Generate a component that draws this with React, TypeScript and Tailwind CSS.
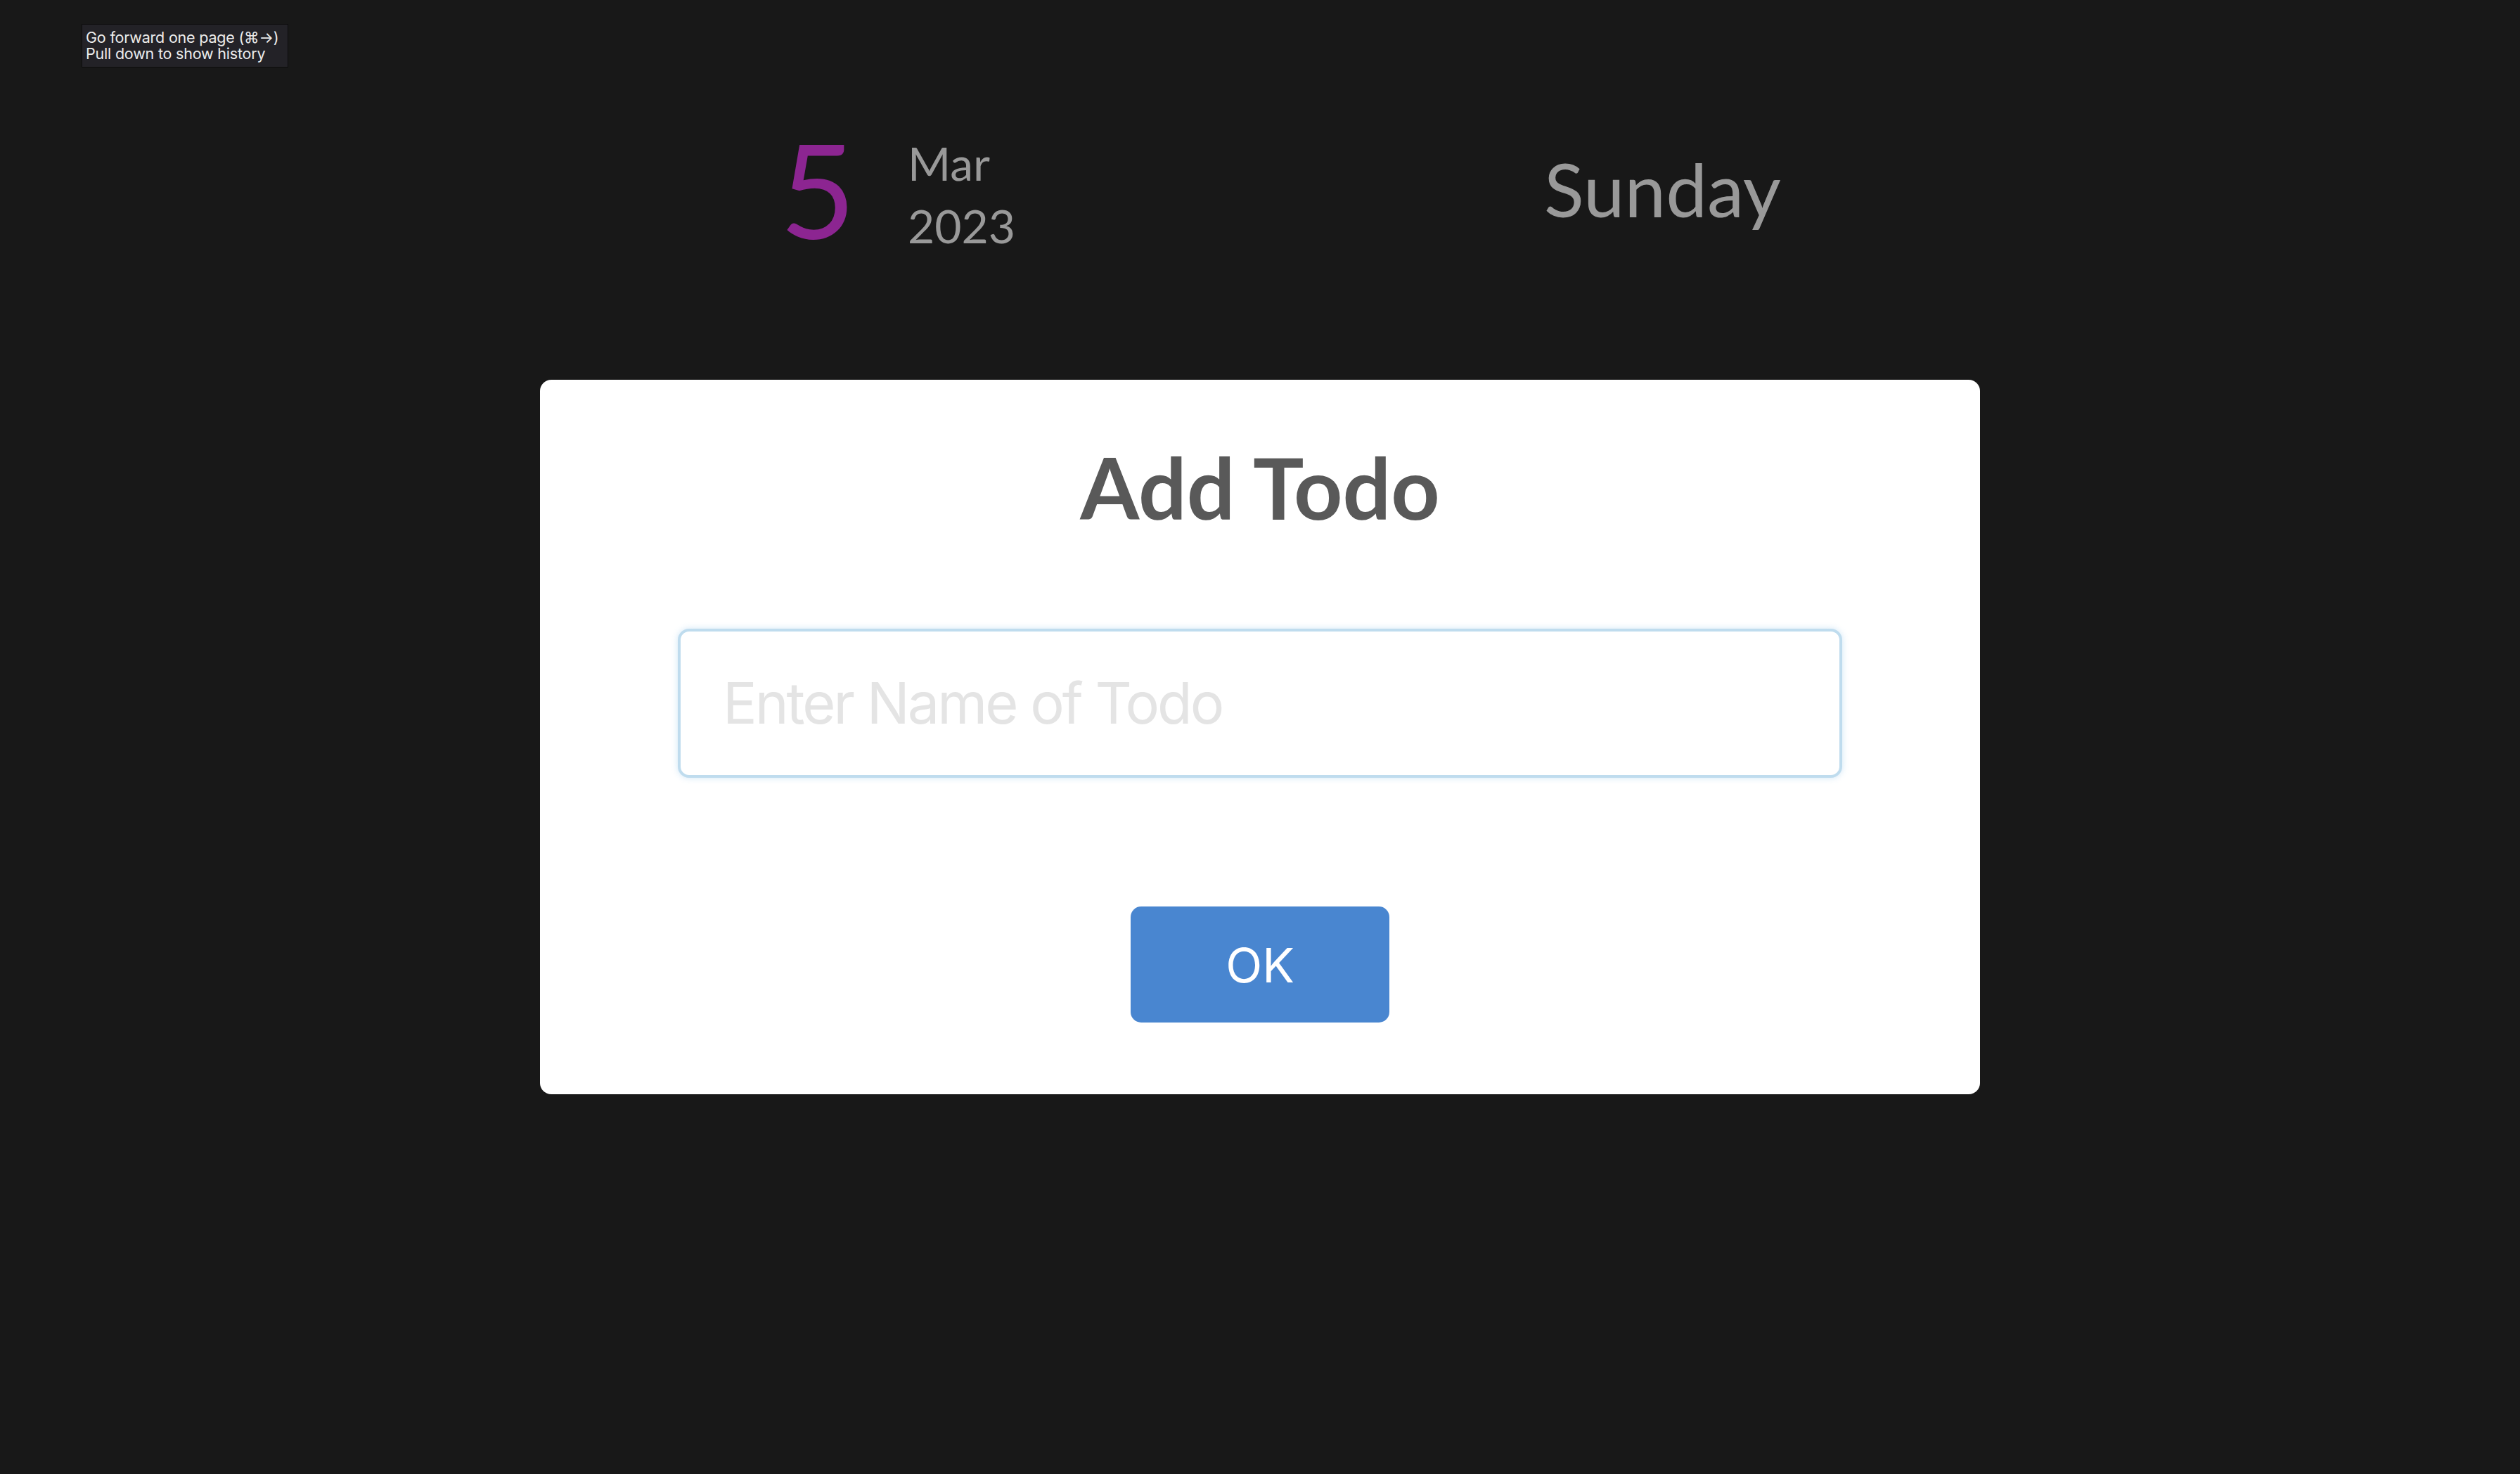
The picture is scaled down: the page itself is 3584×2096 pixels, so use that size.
import { useState } from "react";

export default function App() {
  const [todo, setTodo] = useState("");

  return (
    <div className="relative min-h-screen w-full bg-[#181818] font-['Lato',sans-serif]">
      {/* native browser tooltip left over the page */}
      <div className="absolute left-[116px] top-[34px] w-[294px] whitespace-nowrap border border-[#0c0c0c] bg-[#232227] px-[5px] py-[7px] font-['Inter',sans-serif] text-[21.5px] leading-[23px] tracking-[-0.2px] text-[#ececec]">
        <div>Go forward one page (⌘→)</div>
        <div>Pull down to show history</div>
      </div>

      <div className="mx-auto w-[2048px]">
        <header className="flex h-[540px] items-start justify-between pl-[341px] pr-[283px] pt-[175px]">
          <div className="flex items-start gap-[74px]">
            <span className="text-[186px] leading-none text-[#8c2591]">5</span>
            <div className="mt-[12px] flex flex-col text-[66px] leading-[89px] text-[#999999]">
              <span>Mar</span>
              <span>2023</span>
            </div>
          </div>
          <div className="mt-[30px] text-[105px] leading-[1.2] text-[#999999]">Sunday</div>
        </header>

        <div className="flex flex-col items-center rounded-[16px] bg-white pb-[102px] pt-[80px]">
          <h1 className="text-[121px] font-bold leading-[1.2] text-[#595959]">Add Todo</h1>

          <input
            type="text"
            value={todo}
            onChange={(e) => setTodo(e.target.value)}
            placeholder="Enter Name of Todo"
            className="mt-[129px] h-[212px] w-[1656px] rounded-[16px] border-4 border-[#bfdcee] bg-white pl-[60px] font-['Inter',sans-serif] text-[81px] tracking-[-3px] text-[#555] shadow-[0_0_10px_rgba(150,200,235,0.45)] outline-none placeholder:text-[#e4e4e4]"
          />

          <button className="mt-[183px] flex h-[165px] w-[368px] items-center justify-center rounded-[15px] bg-[#4986d0] font-['Inter',sans-serif] text-[68px] text-white">
            OK
          </button>
        </div>
      </div>
    </div>
  );
}
